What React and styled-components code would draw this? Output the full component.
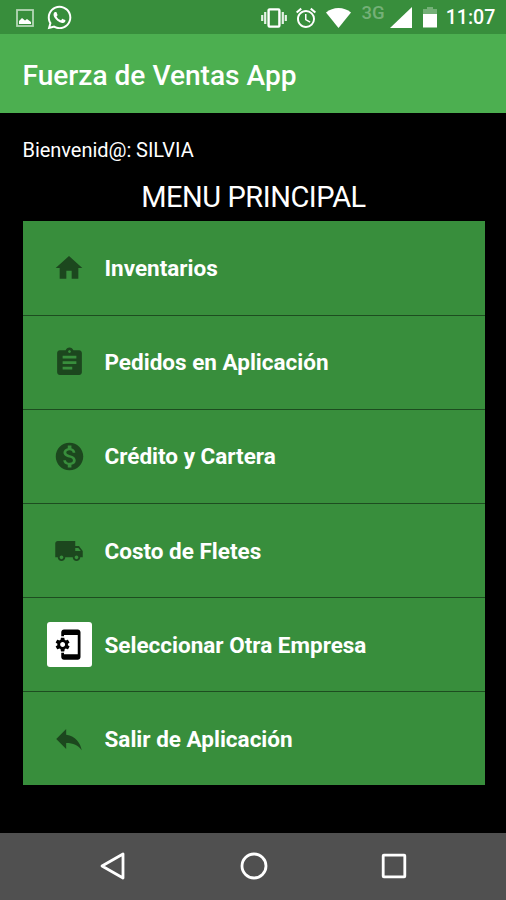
import styled, { createGlobalStyle } from 'styled-components';
import {
  MdAlarm,
  MdAssignment,
  MdHome,
  MdLocalShipping,
  MdMonetizationOn,
  MdPhonelinkSetup,
  MdReply,
} from 'react-icons/md';
import { FaWhatsapp } from 'react-icons/fa';

const GlobalStyle = createGlobalStyle`
  * {
    box-sizing: border-box;
  }

  body {
    margin: 0;
    background: #000;
    font-family: Roboto, 'Liberation Sans', sans-serif;
    color: #fff;
  }

  svg {
    display: block;
    flex: none;
  }
`;

const Screen = styled.div`
  display: flex;
  flex-direction: column;
  width: 506px;
  height: 900px;
  overflow: hidden;
  background: #000;
`;

const StatusBar = styled.header`
  display: flex;
  justify-content: space-between;
  height: 34px;
  padding: 0 11px 0 16px;
  background: #388e3c;
`;

const StatusGroup = styled.div`
  display: flex;
  align-items: center;
  height: 35px;
`;

const StatusItem = styled.span`
  display: flex;
  justify-content: center;
  width: ${({ $width }) => $width}px;
  margin-left: ${({ $gap }) => $gap || 0}px;
`;

const Network = styled(StatusItem)`
  padding-bottom: 9px;
  font-size: 18.5px;
  font-weight: 500;
  line-height: 20px;
  color: #74b077;
`;

const Clock = styled(StatusItem)`
  font-size: 19.6px;
  font-weight: 500;
  line-height: 24px;
  white-space: nowrap;
`;

const AppBar = styled.div`
  display: flex;
  align-items: center;
  height: 79px;
  padding: 4px 22.5px 0;
  background: #4caf50;
`;

const AppTitle = styled.h1`
  margin: 0;
  font-size: 28.1px;
  font-weight: 500;
  line-height: 32px;
  white-space: nowrap;
`;

const Content = styled.main`
  flex: 1;
  padding: 25px 21.5px 0 22.5px;
`;

const Welcome = styled.p`
  margin: 0;
  font-size: 20px;
  letter-spacing: -0.04px;
  line-height: 24px;
`;

const MenuTitle = styled.h2`
  margin: 19px 0 6.6px;
  font-size: 29px;
  font-weight: 400;
  letter-spacing: -0.45px;
  line-height: 33px;
  text-align: center;
`;

const Menu = styled.ul`
  margin: 0;
  padding: 0;
  list-style: none;
`;

const MenuItem = styled.li`
  display: flex;
  align-items: center;
  height: 94.15px;
  padding-left: 24px;
  background: #388e3c;

  & + & {
    border-top: 1.5px solid #1d4d20;
  }
`;

const IconBox = styled.span`
  display: flex;
  align-items: center;
  justify-content: center;
  width: 45px;
  height: 45px;
  border-radius: 3px;
  color: ${({ $filled }) => ($filled ? '#000' : '#1c471e')};
  background: ${({ $filled }) => ($filled ? '#fff' : 'transparent')};
`;

const Label = styled.span`
  margin-left: 13px;
  font-size: 22.5px;
  font-weight: 700;
  line-height: 28px;
  white-space: nowrap;
`;

const NavBar = styled.nav`
  display: flex;
  align-items: center;
  justify-content: center;
  gap: 110.5px;
  height: 67.5px;
  padding-left: 1px;
  background: #505050;
`;

const ImageIcon = () => (
  <svg width="18" height="18" viewBox="0 0 18 18">
    <rect x="1" y="1" width="16" height="16" fill="none" stroke="#b5d6b6" strokeWidth="1.8" />
    <path d="M3 15V12L6 9l3 2.5 2-1.5 4 3v2z" fill="#fff" />
  </svg>
);

const VibrateIcon = () => (
  <svg width="26" height="20" viewBox="0 0 26 20">
    <rect x="7.6" y="1.4" width="10.8" height="17.2" rx="1" fill="none" stroke="#fff" strokeWidth="2.4" />
    <path d="M1.2 7v6M4.2 4v12M21.8 4v12M24.8 7v6" stroke="#e4f1e4" strokeWidth="2.2" />
  </svg>
);

const WifiIcon = () => (
  <svg width="25" height="20" viewBox="0 0 25 20">
    <path d="M0 4.5C7-1.5 18-1.5 25 4.5L12.5 20z" fill="#fff" />
  </svg>
);

const SignalIcon = () => (
  <svg width="22" height="21" viewBox="0 0 22 21">
    <path d="M0 21L22 0v21z" fill="#fff" />
  </svg>
);

const BatteryIcon = () => (
  <svg width="14" height="21" viewBox="0 0 14 21">
    <path d="M4 0h6v2h4v5H0V2h4z" fill="#74b077" />
    <path d="M0 7h14v13.5H0z" fill="#fff" />
  </svg>
);

const BackIcon = () => (
  <svg width="30" height="30" viewBox="0 0 30 30">
    <path d="M25 3v24L4 15z" fill="none" stroke="#fff" strokeWidth="2.8" strokeLinejoin="round" />
  </svg>
);

const CircleIcon = () => (
  <svg width="30" height="30" viewBox="0 0 30 30">
    <circle cx="15" cy="15" r="12" fill="none" stroke="#fff" strokeWidth="2.8" />
  </svg>
);

const SquareIcon = () => (
  <svg width="30" height="30" viewBox="0 0 30 30">
    <rect x="4.2" y="4.2" width="21.6" height="21.6" rx=".6" fill="none" stroke="#fff" strokeWidth="2.8" />
  </svg>
);

const menuItems = [
  { label: 'Inventarios', icon: MdHome, size: 32 },
  { label: 'Pedidos en Aplicación', icon: MdAssignment, size: 33 },
  { label: 'Crédito y Cartera', icon: MdMonetizationOn, size: 33 },
  { label: 'Costo de Fletes', icon: MdLocalShipping, size: 30 },
  { label: 'Seleccionar Otra Empresa', icon: MdPhonelinkSetup, size: 33, filled: true },
  { label: 'Salir de Aplicación', icon: MdReply, size: 34 },
];

const App = () => (
  <>
    <GlobalStyle />
    <Screen>
      <StatusBar>
        <StatusGroup>
          <StatusItem $width={18}>
            <ImageIcon />
          </StatusItem>
          <StatusItem $width={25} $gap={13}>
            <FaWhatsapp size={27} />
          </StatusItem>
        </StatusGroup>
        <StatusGroup>
          <StatusItem $width={26}>
            <VibrateIcon />
          </StatusItem>
          <StatusItem $width={22} $gap={8}>
            <MdAlarm size={24} />
          </StatusItem>
          <StatusItem $width={25} $gap={9}>
            <WifiIcon />
          </StatusItem>
          <Network $width={24} $gap={10}>3G</Network>
          <StatusItem $width={22} $gap={5}>
            <SignalIcon />
          </StatusItem>
          <StatusItem $width={14} $gap={11}>
            <BatteryIcon />
          </StatusItem>
          <Clock $width={49} $gap={9}>11:07</Clock>
        </StatusGroup>
      </StatusBar>

      <AppBar>
        <AppTitle>Fuerza de Ventas App</AppTitle>
      </AppBar>

      <Content>
        <Welcome>Bienvenid@: SILVIA</Welcome>
        <MenuTitle>MENU PRINCIPAL</MenuTitle>
        <Menu>
          {menuItems.map(({ label, icon: Icon, size, filled }) => (
            <MenuItem key={label}>
              <IconBox $filled={filled}>
                <Icon size={size} />
              </IconBox>
              <Label>{label}</Label>
            </MenuItem>
          ))}
        </Menu>
      </Content>

      <NavBar>
        <BackIcon />
        <CircleIcon />
        <SquareIcon />
      </NavBar>
    </Screen>
  </>
);

export default App;
